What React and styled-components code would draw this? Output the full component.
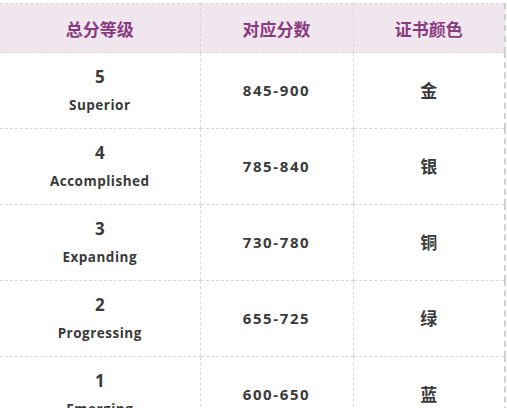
import React from "react";
import styled, { createGlobalStyle } from "styled-components";

const GlobalStyle = createGlobalStyle`
  body {
    margin: 0;
    background: #ffffff;
    font-family: "Open Sans", "Noto Sans CJK SC", sans-serif;
  }
`;

const Wrap = styled.div`
  padding-top: 3px;
  width: 507px;
  overflow: hidden;
`;

const Table = styled.table`
  width: 506px;
  border-collapse: collapse;
  table-layout: fixed;
  border-top: 1px dashed #d6d6d6;
  border-right: 2px dashed #cfcfcf;
`;

const Head = styled.th`
  height: 48px;
  padding: 0;
  background: #f0e6ee;
  color: #8a3a80;
  font-family: "Noto Sans CJK SC", sans-serif;
  font-size: 17px;
  font-weight: 700;
  text-align: center;
  border-bottom: 1px dashed #d6d6d6;
  & + & {
    border-left: 1px dashed #d6d6d6;
  }
`;

const Cell = styled.td`
  height: 75px;
  padding: 0;
  text-align: center;
  color: #3a3a3a;
  font-weight: 700;
  border-bottom: 1px dashed #d9d9d9;
  & + & {
    border-left: 1px dashed #d9d9d9;
  }
`;

const Level = styled.div`
  font-family: "Open Sans", sans-serif;
  font-size: 17px;
  line-height: 20px;
  margin-top: -2px;
`;

const Label = styled.div`
  font-family: "Open Sans", sans-serif;
  font-size: 13.5px;
  line-height: 16px;
  margin-top: 10px;
  letter-spacing: 0.5px;
`;

const Score = styled.span`
  font-family: "Open Sans", sans-serif;
  font-size: 15px;
  letter-spacing: 1.6px;
  position: relative;
  top: -1px;
`;

const Colour = styled.span`
  font-family: "Noto Sans CJK SC", sans-serif;
  font-size: 17px;
  position: relative;
  top: -1px;
`;

const rows = [
  { level: 5, label: "Superior", score: "845-900", colour: "金" },
  { level: 4, label: "Accomplished", score: "785-840", colour: "银" },
  { level: 3, label: "Expanding", score: "730-780", colour: "铜" },
  { level: 2, label: "Progressing", score: "655-725", colour: "绿" },
  { level: 1, label: "Emerging", score: "600-650", colour: "蓝" },
];

export default function App() {
  return (
    <Wrap>
      <GlobalStyle />
      <Table>
        <colgroup>
          <col style={{ width: 200 }} />
          <col style={{ width: 153 }} />
          <col />
        </colgroup>
        <thead>
          <tr>
            <Head>总分等级</Head>
            <Head>对应分数</Head>
            <Head>证书颜色</Head>
          </tr>
        </thead>
        <tbody>
          {rows.map((r) => (
            <tr key={r.level}>
              <Cell>
                <Level>{r.level}</Level>
                <Label>{r.label}</Label>
              </Cell>
              <Cell>
                <Score>{r.score}</Score>
              </Cell>
              <Cell>
                <Colour>{r.colour}</Colour>
              </Cell>
            </tr>
          ))}
        </tbody>
      </Table>
    </Wrap>
  );
}
